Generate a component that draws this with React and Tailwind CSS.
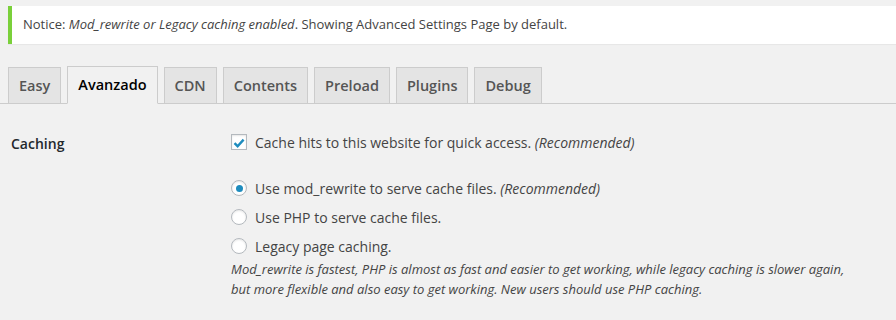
const tabs = ['Easy', 'Avanzado', 'CDN', 'Contents', 'Preload', 'Plugins', 'Debug'];

// Square checkbox, WP admin style
const Checkbox = () => (
  <span className="w-4 h-4 shrink-0 bg-white border border-[#b4b9be] shadow-[inset_0_1px_2px_rgba(0,0,0,0.1)] flex items-center justify-center">
    <svg width="14" height="14" viewBox="0 0 14 14" className="mt-[1px]">
      <path d="M2.5 7.2 L5.6 10.2 L11.6 3.6" fill="none" stroke="#1e8cbe" strokeWidth="2.4" strokeLinejoin="miter" />
    </svg>
  </span>
);

// Round radio
const Radio = ({ checked }) => (
  <span className="w-4 h-4 shrink-0 rounded-full bg-white border border-[#b4b9be] shadow-[inset_0_1px_2px_rgba(0,0,0,0.1)] flex items-center justify-center">
    {checked && <span className="w-[7px] h-[7px] rounded-full bg-[#1e8cbe]"></span>}
  </span>
);

const RadioRow = ({ checked, children }) => (
  <label className="flex items-center h-5 gap-2">
    <Radio checked={checked} />
    <span>{children}</span>
  </label>
);

export default function App() {
  return (
    <div className="w-[896px] h-[320px] overflow-hidden bg-[#f1f1f1] text-[#444] font-['Open_Sans',sans-serif]">
      {/* Notice */}
      <div className="pt-[6px] pl-2">
        <div className="bg-white border-l-4 border-[#7ad03a] shadow-[0_1px_1px_rgba(0,0,0,0.04)] h-[38px] flex items-center pl-[11px] text-[13px]">
          <p>
            Notice: <em>Mod_rewrite or Legacy caching enabled</em>. Showing Advanced Settings Page by default.
          </p>
        </div>
      </div>

      {/* Tabs */}
      <div className="mt-[22px] flex items-end pl-2 gap-[6px] border-b border-[#ccc]">
        {tabs.map((t) => (
          <div
            key={t}
            className={
              t === 'Avanzado'
                ? 'px-[10px] pt-[6px] pb-[6px] border border-[#ccc] border-b-[#f1f1f1] -mb-px bg-[#f1f1f1] text-black text-[14.5px] font-semibold leading-6'
                : 'px-[10px] pt-[6px] pb-[5px] border border-[#ccc] border-b-0 bg-[#e4e4e4] text-[#555] text-[14.5px] font-semibold leading-6'
            }
          >
            {t}
          </div>
        ))}
      </div>

      {/* Form */}
      <div className="flex">
        <div className="w-[221px] shrink-0 pl-[11px] pt-[30px] text-[14px] font-semibold leading-5 text-[#23282d]">Caching</div>
        <div className="pl-[10px] pt-[28px] text-[14px]">
          <label className="flex items-center h-5 gap-2">
            <Checkbox />
            <span>
              Cache hits to this website for quick access. <em>(Recommended)</em>
            </span>
          </label>
          <div className="mt-[26px] flex flex-col gap-[9px]">
            <RadioRow checked>
              Use mod_rewrite to serve cache files. <em>(Recommended)</em>
            </RadioRow>
            <RadioRow>Use PHP to serve cache files.</RadioRow>
            <RadioRow>Legacy page caching.</RadioRow>
          </div>
          <p className="mt-[3px] text-[13px] italic leading-5">
            Mod_rewrite is fastest, PHP is almost as fast and easier to get working, while legacy caching is slower again,
            <br />
            but more flexible and also easy to get working. New users should use PHP caching.
          </p>
        </div>
      </div>
    </div>
  );
}
